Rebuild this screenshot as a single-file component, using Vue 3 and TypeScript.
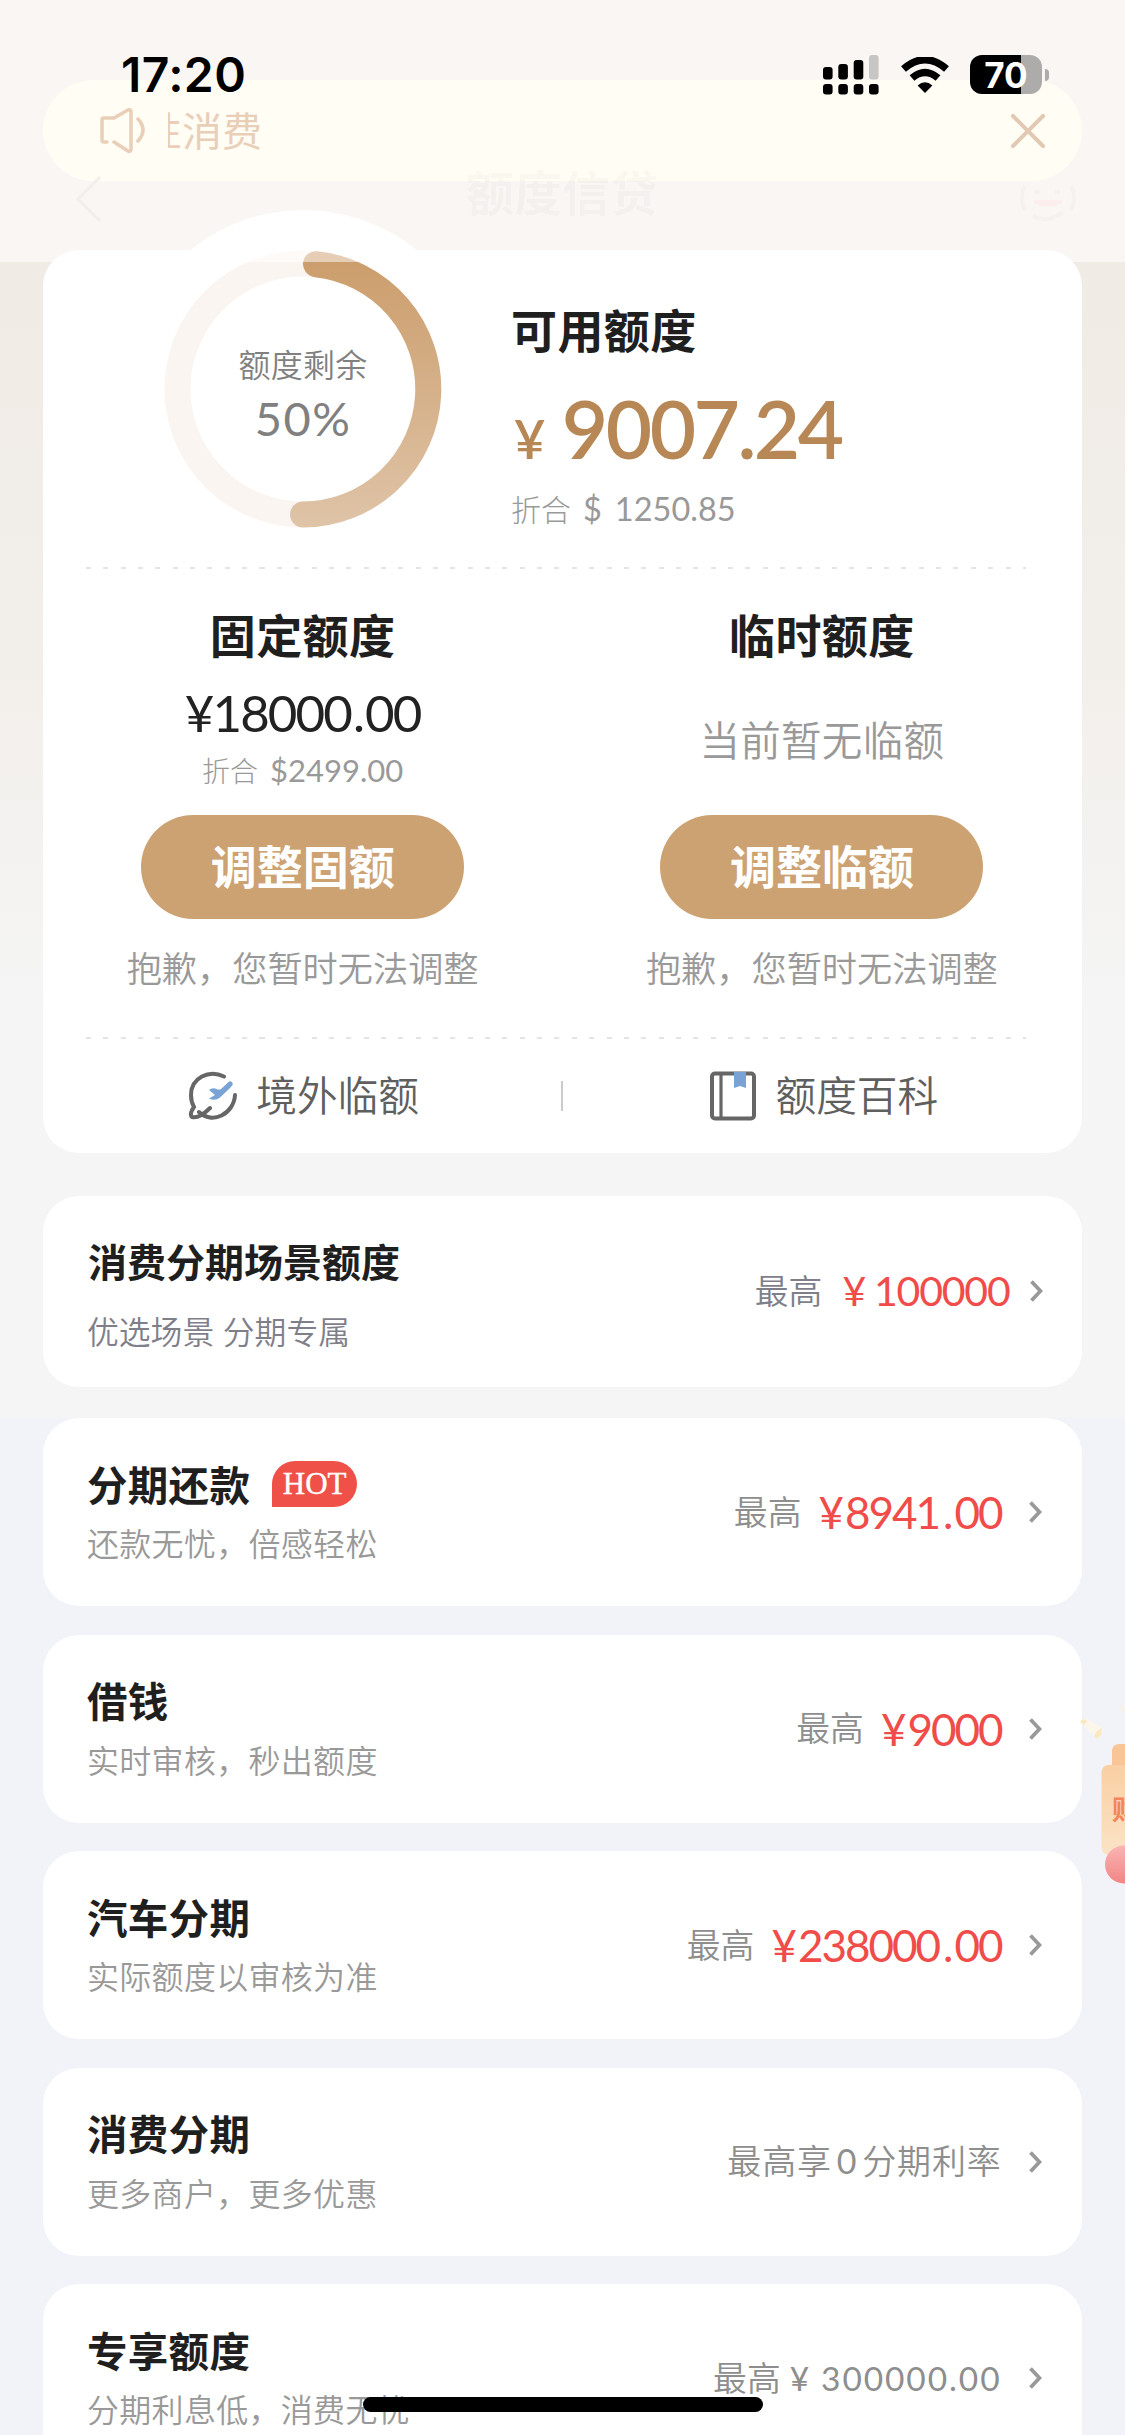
<script setup lang="ts">
interface Product {
  title: string
  desc: string
  amount?: string
  plain?: string
  hot?: boolean
}

const products: Product[] = [
  { title: '分期还款', desc: '还款无忧，倍感轻松', amount: '8941.00', hot: true },
  { title: '借钱', desc: '实时审核，秒出额度', amount: '9000' },
  { title: '汽车分期', desc: '实际额度以审核为准', amount: '238000.00' },
  { title: '消费分期', desc: '更多商户，更多优惠' },
  { title: '专享额度', desc: '分期利息低，消费无忧', plain: '300000.00' },
]

const whole = (amount: string): string => amount.split('.')[0]
const cents = (amount: string): string => amount.split('.')[1] ?? ''
</script>

<template>
  <div class="page">
    <header class="top">
      <svg class="back" width="30" height="48" viewBox="0 0 30 48"><path d="M26 2 4 24l22 22" /></svg>
      <h1>额度信贷</h1>
      <svg class="service" width="62" height="46" viewBox="0 0 62 46">
        <path d="M8 10Q2 22 8 34M54 10q6 12 0 24M16 40q15 8 30-4M18 16h5M38 16h5" fill="none" stroke="#f5f1ef" stroke-width="4" />
        <path d="M17 24h28v3q-14 8-28 0z" fill="#fbeeec" />
      </svg>
    </header>

    <div class="notice">
      <svg class="horn" width="48" height="46" viewBox="0 0 48 46">
        <path d="M8 34H5q-2 0-2-2V12q0-2 2-2h10L29 2q3-1 3 2v37q0 3-3 2L15 34M39 11q10 11 0 22" />
      </svg>
      <div class="marquee"><span>性消费</span></div>
      <svg class="close" width="34" height="34" viewBox="0 0 34 34"><path d="m2 2 30 30M32 2 2 32" /></svg>
    </div>

    <div class="status">
      <span class="time">17:20</span>
      <svg class="signal" width="57" height="40" viewBox="0 0 57 40">
        <g fill="#000">
          <rect x="0" y="12" width="9.6" height="12.5" rx="3" /><rect x="15.3" y="9" width="9.6" height="15.5" rx="3" />
          <rect x="30.7" y="5" width="9.6" height="19.5" rx="3" />
          <rect x="0" y="29" width="9.6" height="10.5" rx="3" /><rect x="15.3" y="29" width="9.6" height="10.5" rx="3" />
          <rect x="30.7" y="29" width="9.6" height="10.5" rx="3" /><rect x="46" y="29" width="9.6" height="10.5" rx="3" />
        </g>
        <rect x="46" y="0" width="9.6" height="24.5" rx="3" fill="#c8c6c4" />
      </svg>
      <svg class="wifi" width="48" height="36" viewBox="0 0 48 36">
        <path d="M2.500 12Q24-6.500 45.500 12M11 21q13-11 26 0" fill="none" stroke="#000" stroke-width="7.400" />
        <path d="M24 36 16.600 28.500q7.400-6.500 14.800 0z" />
      </svg>
      <div class="battery"><span>70</span></div>
      <i class="nub"></i>
    </div>

    <main>
      <section class="card quota">
        <div class="bump"></div>
        <div class="hero">
          <div class="gauge">
            <svg width="278" height="278" viewBox="0 0 278 278">
              <defs>
                <linearGradient id="ring" x1="0" y1="0" x2="0" y2="278" gradientUnits="userSpaceOnUse">
                  <stop offset="0" stop-color="#cb9c6a" /><stop offset="1" stop-color="#dfc4a8" />
                </linearGradient>
              </defs>
              <circle cx="139" cy="139" r="125.5" fill="none" stroke="#faf5f1" stroke-width="26" />
              <path d="M152 14.200A125.500 125.500 0 0 1 139 264.500" fill="none" stroke="url(#ring)" stroke-width="26" stroke-linecap="round" />
            </svg>
            <div class="veil"></div>
            <div class="gauge-text"><span>额度剩余</span><b>50%</b></div>
          </div>
          <div class="available">
            <h2>可用额度</h2>
            <p class="big"><i>¥</i>9007<s>.</s>24</p>
            <p class="fx"><em>折合</em><i>$</i>1250.85</p>
          </div>
        </div>
        <div class="dash"></div>
        <div class="cols">
          <div class="col">
            <h2>固定额度</h2>
            <p class="fixed"><i>¥</i>18000<s>.</s>00</p>
            <p class="fx small"><em>折合</em>$2499.00</p>
            <button>调整固额</button>
            <p class="note">抱歉，您暂时无法调整</p>
          </div>
          <div class="col">
            <h2>临时额度</h2>
            <p class="none">当前暂无临额</p>
            <button>调整临额</button>
            <p class="note">抱歉，您暂时无法调整</p>
          </div>
        </div>
        <div class="dash"></div>
        <div class="links">
          <div class="link">
            <svg width="50" height="50" viewBox="0 0 50 50">
              <path d="M36 5.500C21-2 3 7 3 24q0 7 3 12-5 7-2 10 7 2 18-9M47 24C46 43 24 54 11 41" fill="none" stroke="#666" stroke-width="4" stroke-linecap="round" />
              <path d="M43 10.500q3.500 2 0 5.500L32 26.500q-5 4-11 1l6-3.500-6-5q3.500-3 8.500-.500h3l7.500-7q1.500-1.700 3-1z" fill="#79a3d4" />
            </svg>
            <span>境外临额</span>
          </div>
          <i class="sep"></i>
          <div class="link">
            <svg width="48" height="50" viewBox="0 0 48 50">
              <rect x="3" y="2.500" width="42" height="45" rx="3" fill="none" stroke="#666" stroke-width="4" />
              <path d="M12 2v46" stroke="#666" stroke-width="3.200" />
              <path d="M25 1h12v16l-6-2-6 2z" fill="#79a3d4" />
            </svg>
            <span>额度百科</span>
          </div>
        </div>
      </section>

      <section class="card scene">
        <div class="info"><h3>消费分期场景额度</h3><p>优选场景 分期专属</p></div>
        <div class="value">
          <span class="label">最高</span><span class="money"><i>¥</i>100000</span>
          <svg class="arrow" width="14" height="24" viewBox="0 0 14 24"><path d="m2.500 2.500 9 9.500-9 9.500" /></svg>
        </div>
      </section>

      <section v-for="p in products" :key="p.title" class="card product">
        <div class="info">
          <h3>{{ p.title }}<span v-if="p.hot" class="hot">HOT</span></h3>
          <p>{{ p.desc }}</p>
        </div>
        <div class="value">
          <span v-if="p.amount || p.plain" class="label">最高</span>
          <span v-else class="label wide">最高享<i>0</i>分期利率</span>
          <span v-if="p.amount" class="money"><i>¥</i>{{ whole(p.amount) }}<template v-if="cents(p.amount)"><s>.</s>{{ cents(p.amount) }}</template></span>
          <span v-if="p.plain" class="plain"><i>¥</i>{{ p.plain }}</span>
          <svg class="arrow" width="14" height="24" viewBox="0 0 14 24"><path d="m2.500 2.500 9 9.500-9 9.500" /></svg>
        </div>
      </section>
    </main>

    <aside class="float">
      <svg width="85" height="185" viewBox="0 0 85 185">
        <defs>
          <linearGradient id="bag" x1="0" y1="0" x2="0" y2="1"><stop offset="0" stop-color="#f9cfa3" /><stop offset="1" stop-color="#fbe3c6" /></linearGradient>
          <linearGradient id="ball" x1="0" y1="0" x2="0" y2="1"><stop offset="0" stop-color="#f9b4b4" /><stop offset="1" stop-color="#f28585" /></linearGradient>
        </defs>
        <path d="M40 21q4-5 8-1l10 5q5 1 2 7l-3 5-9-6z" fill="#fbf6ea" />
        <path d="m40 22 4-3 3 2-3 4zM57 31l5-3-1 7-4 4-3-3z" fill="#fbe8c0" />
        <path d="m76 4 4 1 2 6 3 1-3-6z" fill="#fbf0d8" />
        <path d="M72 66V50q1-6 7-6h6v22z" fill="#f9c596" />
        <rect x="61.500" y="65" width="40" height="90" rx="7" fill="url(#bag)" />
        <circle cx="84" cy="164.500" r="19" fill="url(#ball)" />
      </svg>
      <span>财</span>
    </aside>
    <div class="home"></div>
  </div>
</template>

<style>
body { overflow: hidden; }
</style>

<style scoped>
* { box-sizing: border-box; }
h1, h2, h3, p { margin: 0; font-weight: 400; }
i, em { font-style: normal; }
s { text-decoration: none; }
svg { display: block; flex: none; }

.page {
  position: relative;
  width: 1125px;
  height: 2435px;
  overflow: hidden;
  font-family: Lato, "Noto Sans CJK SC", sans-serif;
  white-space: nowrap;
  background: linear-gradient(#f9f6f3 262px, #f0ebe5 262px, #f2eee9 600px, #f5f5f5 1010px, #f5f5f5 1417px, #f2f3f8 1418px);
}
.top {
  position: relative;
  z-index: 1;
  display: flex;
  justify-content: space-between;
  align-items: center;
  height: 250px;
  padding: 148px 46px 0 74px;
}
.back path { fill: none; stroke: #f2eeeb; stroke-width: 3; }
h1 { margin: -12px 0 0 3px; font-size: 48px; line-height: 60px; font-weight: 700; color: rgba(120, 80, 60, .04); }

.notice {
  position: absolute;
  left: 43px; top: 80px;
  display: flex;
  align-items: center;
  width: 1039px; height: 101px;
  padding: 0 37px 0 56px;
  border-radius: 51px;
  background: #fffdf4;
}
.horn path { fill: none; stroke: #e9cfb8; stroke-width: 3.500px; stroke-linecap: round; stroke-linejoin: round; }
.marquee { flex: 1; margin-left: 21px; overflow: hidden; line-height: 60px; font-size: 40px; font-weight: 400; color: #e9cfb8; }
.marquee span { margin-left: -26px; }
.close path { fill: none; stroke: #e2c9b3; stroke-width: 4; stroke-linecap: round; }

.status { position: absolute; left: 0; top: 55px; display: flex; align-items: flex-start; height: 40px; width: 1125px; padding-left: 121px; }
.time { width: 702px; font: 600 48px/40px Inter, sans-serif; letter-spacing: .4px; }
.signal { margin-right: 21px; }
.wifi { margin: 2px 21px 0 0; }
.battery {
  width: 72px; height: 39px;
  border-radius: 12px;
  background: linear-gradient(90deg, #000 51px, #aeacaa 51px);
  font: 700 35px/40px Inter, sans-serif;
  color: #fff;
  text-align: center;
}
.nub { width: 4px; height: 12px; margin: 14px 0 0 3px; border-radius: 0 6px 6px 0; background: #aeacaa; }

main { padding: 0 43.500px 0 43px; }
.card { position: relative; border-radius: 36px; background: #fff; }
.quota { height: 903px; margin-bottom: 43px; }
.bump { position: absolute; left: 80px; top: -40px; width: 361px; height: 361px; border-radius: 50%; background: #fff; }
.hero { position: relative; display: flex; height: 317px; padding-left: 121px; }
.gauge { position: relative; width: 278px; height: 278px; }
.veil { position: absolute; left: 0; top: 0; width: 278px; height: 12px; background: rgba(255, 255, 255, .5); }
.gauge-text { position: absolute; left: 0; top: 90px; width: 278px; display: flex; flex-direction: column; align-items: center; color: #808080; }
.gauge-text span { font-size: 32px; line-height: 50px; font-weight: 350; letter-spacing: .2px; }
.gauge-text b { font-size: 47px; line-height: 56px; font-weight: 400; letter-spacing: 1.500px; }
.available { margin: 51px 0 0 69px; }
h2 { font-size: 46px; line-height: 60px; font-weight: 700; letter-spacing: .4px; color: #1f1f1f; }
.big { height: 80px; margin-top: 27px; font-size: 80px; line-height: 80px; font-weight: 600; letter-spacing: -2.500px; color: #b78855; }
.big i { margin: 0 19px 0 3px; font-size: 54px; }
.fx { height: 40px; margin-top: 21px; font-size: 32.500px; line-height: 40px; color: #999; }
.fx em { margin-right: 12px; font-size: 30px; font-weight: 300; }
.fx i { margin-right: 13px; }
.dash { position: relative; height: 2px; width: 940px; margin-left: 43px; background: repeating-linear-gradient(90deg, #e4e4e4 0 5px, transparent 5px 17.350px); }
.cols { display: flex; height: 468px; }
.col { flex: 1; display: flex; flex-direction: column; align-items: center; padding: 37px 0 0; }
.fixed { height: 50px; margin-top: 22px; font-size: 51px; line-height: 50px; letter-spacing: -1.900px; color: #222; }
.fixed s { margin: 0 2px 0 2px; }
.fx.small { margin-top: 12px; font-size: 31px; }
.fx.small em { font-size: 28px; margin-right: 12px; }
.none { margin: 50px 0 49px; font-size: 40.500px; line-height: 50px; font-weight: 350; letter-spacing: .3px; color: #999; }
button {
  width: 323px; height: 104px;
  margin-top: 25px;
  padding: 0;
  border: 0;
  border-radius: 52px;
  background: #cda272;
  color: #fff;
  font: 700 46px/104px Lato, "Noto Sans CJK SC", sans-serif;
}
.none + button { margin-top: 0; }
.note { height: 40px; margin-top: 29px; font-size: 35.200px; line-height: 40px; font-weight: 350; color: #999; }
.links { display: flex; align-items: center; height: 114px; }
.link { flex: 1; display: flex; justify-content: center; align-items: center; gap: 18px; padding-left: 3px; font-size: 40.700px; line-height: 50px; color: #5f5f5f; font-weight: 350; }
.sep { width: 2px; height: 30px; background: #ccc; }

.scene { display: flex; justify-content: space-between; height: 191px; margin-bottom: 31px; padding: 41px 39px 0 45px; }
.scene h3 { font-size: 39px; line-height: 50px; font-weight: 600; }
.scene .info p { margin: 25px 0 0 -1px; font-size: 31.800px; line-height: 40px; color: #7f7f8b; }
.info h3 { color: #1f1f1f; }
.info p { font-weight: 350; color: #999; }
.value { display: flex; align-items: center; height: 60px; color: #8e8e8e; }
.scene .value { margin-top: 24px; color: #7f7f8b; }
.label { position: relative; top: -2px; font-size: 33.800px; font-weight: 350; }
.money { margin-left: 17px; font-size: 44px; line-height: 60px; letter-spacing: -2px; color: #f04c4a; }
.money i { margin-right: 3px; }
.money s { margin: 0 3px 0 4px; }
.scene .money { margin-left: 20px; font-size: 41px; letter-spacing: -1.200px; }
.scene .money i { margin-right: 9px; }
.arrow { margin-left: 26px; }
.scene .arrow { margin-left: 19px; }
.arrow path { fill: none; stroke: #999; stroke-width: 3.800px; }

.product { display: flex; justify-content: space-between; height: 188px; margin-bottom: 28.500px; padding: 40px 40px 0 44px; }
.product h3 { display: flex; align-items: center; height: 50px; font-size: 40.500px; font-weight: 700; letter-spacing: .3px; }
.product .info p { margin-top: 16px; font-size: 32px; line-height: 40px; letter-spacing: .3px; }
.product .value { margin-top: 24px; }
.wide { letter-spacing: .8px; font-size: 34px; }
.wide i { margin: 0 5px; font-weight: 400; }
.plain { margin-left: 9px; font-size: 33.500px; letter-spacing: 1.900px; }
.plain i { margin-right: 10px; }
.hot {
  width: 85px; height: 46px;
  margin: 2px 0 0 22px;
  border-radius: 23px 23px 23px 0;
  background: #ef5148;
  color: #fff;
  font: 400 31px/46px "Liberation Serif", serif;
  text-align: center;
  letter-spacing: 0;
  -webkit-text-stroke: .4px #fff;
}

.float { position: absolute; right: 0; top: 1700px; width: 85px; height: 185px; overflow: hidden; }
.float span { position: absolute; left: 72px; top: 92px; font-size: 27px; line-height: 36px; font-weight: 700; color: #f4845a; }
.home { position: absolute; left: 363px; top: 2397px; width: 400px; height: 15px; border-radius: 8px; background: #000; }
</style>
